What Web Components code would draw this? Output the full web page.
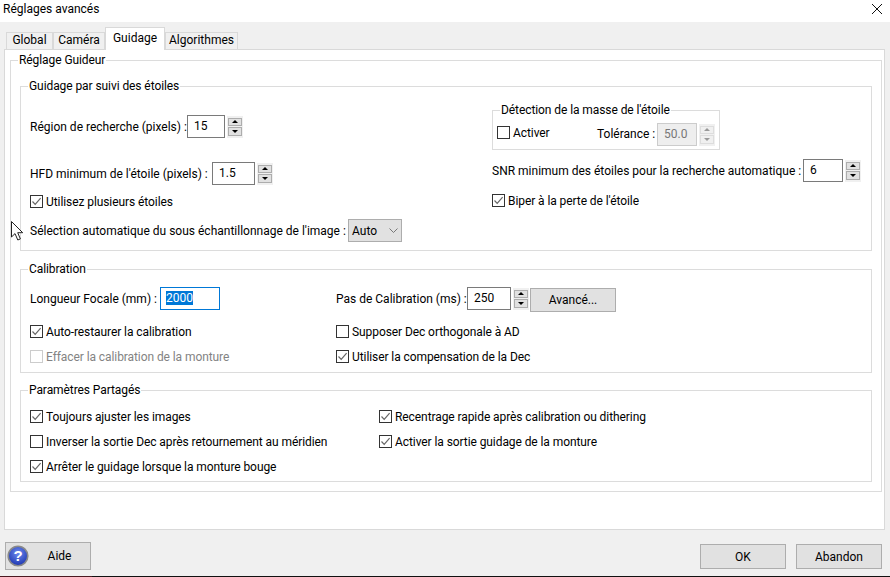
<!DOCTYPE html>
<html lang="fr">
<head>
<meta charset="utf-8">
<title>Réglages avancés</title>
<style>
  html, body { margin: 0; padding: 0; }
  body { width: 890px; height: 577px; overflow: hidden; background: #f0f0f0; font: 12px Roboto, sans-serif; color: #000; }
</style>
</head>
<body>
<template id="dialog-tpl">
  <style>
    :host { display: flex; flex-direction: column; position: relative; width: 890px; height: 577px; overflow: hidden; }
    .title { display: flex; justify-content: space-between; align-items: center; height: 22px; padding: 0 8px 5px 3px; box-sizing: border-box; background: #fff; }
    .title svg { display: block; align-self: flex-start; margin-top: 4px; }
    .tabs { display: flex; align-items: flex-end; height: 27px; padding-left: 6px; box-sizing: border-box; }
    .pane { height: 481px; margin: 0 5px 0 4px; padding: 10px 2px 0 5px; box-sizing: border-box; background: #fff; border: 1px solid #d9d9d9; }
    .footer { display: flex; align-items: flex-start; height: 46px; padding: 14px 8px 0 5px; box-sizing: border-box; gap: 10px; }
    .footer ::slotted(win-button[slot="help"]) { margin-right: auto; }
    .strip { height: 1px; background: linear-gradient(to right, #4a1820 92px, #111 92px); }
    .cursor { position: absolute; left: 11px; top: 221px; }
  </style>
  <div class="title"><slot name="caption"></slot>
    <svg width="10" height="10" viewBox="0 0 10 10"><path d="M0 0L10 10M10 0L0 10" stroke="#111" stroke-width="1"/></svg>
  </div>
  <div class="tabs"><slot name="tabs"></slot></div>
  <div class="pane"><slot></slot></div>
  <div class="footer"><slot name="help"></slot><slot name="actions"></slot></div>
  <div class="strip"></div>
  <svg class="cursor" width="13" height="20" viewBox="0 0 13 20"><path d="M.5.5V16L4 12.6 6.8 19l2.6-1.1-2.7-6.2h5z" fill="#fff" stroke="#222" stroke-width="1"/></svg>
</template>

<template id="tab-tpl">
  <style>
    :host { display: block; box-sizing: border-box; height: 17px; line-height: 14px; text-align: center; background: #f0f0f0; border: 1px solid #d9d9d9; border-bottom: none; white-space: nowrap; }
    :host([selected]) { position: relative; z-index: 1; height: 23px; margin-bottom: -1px; line-height: 20px; background: #fff; }
  </style>
  <slot></slot>
</template>

<template id="group-tpl">
  <style>
    :host { display: block; box-sizing: border-box; border: 1px solid #dcdcdc; }
    .legend { display: block; width: max-content; height: 16px; line-height: 17px; margin: -9px 0 0 7px; padding: 0 1px; background: #fff; letter-spacing: -.08px; }
  </style>
  <div class="legend"><slot name="legend"></slot></div>
  <slot></slot>
</template>

<template id="check-tpl">
  <style>
    :host { display: flex; align-items: center; gap: 3px; height: 13px; white-space: nowrap; letter-spacing: -.08px; }
    :host([disabled]) { color: #838383; }
    .box { width: 13px; height: 13px; flex: none; box-sizing: border-box; border: 1px solid #333; background: #fff; }
    :host([disabled]) .box { border-color: #ccc; }
    svg { display: none; }
    :host([checked]) svg { display: block; }
  </style>
  <div class="box"><svg width="11" height="11" viewBox="0 0 11 11"><path d="M1.5 5.5L4.2 8.3 9.6 2.2" fill="none" stroke="#666" stroke-width="1.2"/></svg></div>
  <span><slot></slot></span>
</template>

<template id="spin-tpl">
  <style>
    :host { display: flex; align-items: center; gap: 2px; flex: none; }
    .field { box-sizing: border-box; height: 23px; line-height: 20px; padding-left: 6px; border: 1px solid #7a7a7a; background: #fff; }
    :host([disabled]) .field { background: #eee; border-color: #ccc; color: #777; }
    .arrows { display: flex; flex-direction: column; gap: 1px; box-sizing: border-box; width: 16px; height: 22px; padding: 2px 1px; background: #f0f0f0; }
    .arrows div { flex: 1; box-sizing: border-box; display: flex; align-items: center; justify-content: center; background: #e1e1e1; border: 1px solid #adadad; }
    :host([disabled]) .arrows div { background: #f0f0f0; border-color: #ddd; }
    svg { display: block; fill: #000; }
    :host([disabled]) svg { fill: #999; }
  </style>
  <div class="field" id="field"><slot></slot></div>
  <div class="arrows">
    <div><svg width="6" height="3"><path d="M3 0L6 3H0z"/></svg></div>
    <div><svg width="6" height="3"><path d="M0 0H6L3 3z"/></svg></div>
  </div>
</template>

<template id="button-tpl">
  <style>
    :host { display: flex; align-items: center; box-sizing: border-box; width: 86px; height: 25px; background: #e1e1e1; border: 1px solid #adadad; }
    .label { flex: 1; text-align: center; }
    ::slotted(svg) { flex: none; }
  </style>
  <slot name="icon"></slot><span class="label"><slot></slot></span>
</template>

<template id="combo-tpl">
  <style>
    :host { display: flex; align-items: center; justify-content: space-between; box-sizing: border-box; width: 54px; height: 23px; padding: 0 3px; background: #e1e1e1; border: 1px solid #adadad; }
    svg { display: block; }
  </style>
  <span><slot></slot></span>
  <svg width="9" height="5"><path d="M.5.5L4.5 4.5 8.5.5" fill="none" stroke="#777"/></svg>
</template>

<template id="form-row-tpl">
  <style>
    :host { display: flex; align-items: center; height: 23px; white-space: nowrap; }
  </style>
  <slot></slot>
</template>

<win-dialog>
  <span slot="caption">Réglages avancés</span>
  <win-tab slot="tabs" style="width:47px">Global</win-tab>
  <win-tab slot="tabs" style="width:52px">Caméra</win-tab>
  <win-tab slot="tabs" style="width:60px" selected>Guidage</win-tab>
  <win-tab slot="tabs" style="width:73px">Algorithmes</win-tab>

  <guide-settings></guide-settings>

  <win-button slot="help" style="height:28px;margin-top:-2px">
    <svg slot="icon" width="22" height="22" viewBox="0 0 22 22" style="margin-left:1px">
      <defs><radialGradient id="help-blue" cx="50%" cy="35%" r="65%"><stop offset="0" stop-color="#6f8cf0"/><stop offset="1" stop-color="#1c35b0"/></radialGradient></defs>
      <circle cx="11" cy="11" r="9.8" fill="url(#help-blue)" stroke="#8a8a8a" stroke-width="1.6"/>
      <text x="11" y="16" text-anchor="middle" font-family="Liberation Sans" font-weight="700" font-size="15" fill="#fff">?</text>
    </svg>
    Aide
  </win-button>
  <win-button slot="actions">OK</win-button>
  <win-button slot="actions">Abandon</win-button>
</win-dialog>

<script>
  // small helper, every element below is just a template + open shadow root
  function define(name, tplId) {
    customElements.define(name, class extends HTMLElement {
      constructor() {
        super();
        this.attachShadow({ mode: "open" });
        this.shadowRoot.append(document.getElementById(tplId).content.cloneNode(true));
      }
    });
  }
  define("win-dialog", "dialog-tpl");
  define("win-tab", "tab-tpl");
  define("win-group", "group-tpl");
  define("win-check", "check-tpl");
  define("win-button", "button-tpl");
  define("win-combo", "combo-tpl");
  define("form-row", "form-row-tpl");

  customElements.define("win-spin", class extends HTMLElement {
    constructor() {
      super();
      this.attachShadow({ mode: "open" });
      this.shadowRoot.append(document.getElementById("spin-tpl").content.cloneNode(true));
      this.shadowRoot.getElementById("field").style.width = (this.getAttribute("field") || 38) + "px";
    }
  });

  // the Guidage page
  const pageTemplate = document.createElement("template");
  pageTemplate.innerHTML = `
    <style>
      :host { display: block; }
      .outer { height: 432px; }
      .stack { display: flex; flex-direction: column; margin: 18px 9px 0 9px; }
      .g1 { height: 165px; }
      .g2 { height: 104px; margin-top: 18px; }
      .g3 { height: 92px; margin-top: 17px; }
      .body { display: grid; padding-left: 9px; }
      .g1 .body { grid-template-columns: 462px 1fr; }
      .g2 .body { grid-template-columns: 306px 1fr; }
      .g3 .body { grid-template-columns: 349px 1fr; }
      .col { display: flex; flex-direction: column; align-items: flex-start; }
      .mass { width: 228px; height: 40px; }
      .mass-row { display: grid; grid-template-columns: 100px auto; align-items: start; padding: 5px 0 0 4px; }
      .mass-row win-check { margin-top: 3px; }
      .mass-row form-row .lbl { margin-top: -1px; }
      .lbl { display: block; flex: none; }
      .sel { display: inline-block; background: #0078d7; color: #fff; line-height: 14px; }
      .focus { box-sizing: border-box; width: 60px; height: 23px; line-height: 20px; padding-left: 5px; border: 1px solid #0078d7; background: #fff; }
      .btn { margin-left: 1px; height: 24px; align-self: flex-start; margin-top: 1px; }
    </style>
    <win-group class="outer">
      <span slot="legend">Réglage Guideur</span>
      <div class="stack">
        <win-group class="g1">
          <span slot="legend">Guidage par suivi des étoiles</span>
          <div class="body">
            <div class="col" style="margin-top:21px">
              <form-row><span class="lbl" style="width:157px">Région de recherche (pixels) :</span><win-spin field="38"><span>15</span></win-spin></form-row>
              <form-row style="margin-top:24px"><span class="lbl" style="width:182px">HFD minimum de l'étoile (pixels) :</span><win-spin field="43"><span>1.5</span></win-spin></form-row>
              <win-check checked style="margin-top:10px">Utilisez plusieurs étoiles</win-check>
              <form-row style="margin-top:11px"><span class="lbl" style="width:318px">Sélection automatique du sous échantillonnage de l'image :</span><win-combo>Auto</win-combo></form-row>
            </div>
            <div class="col" style="margin-top:16px">
              <win-group class="mass">
                <span slot="legend">Détection de la masse de l'étoile</span>
                <div class="mass-row">
                  <win-check>Activer</win-check>
                  <form-row><span class="lbl" style="width:60px">Tolérance :</span><win-spin field="40" disabled><span>50.0</span></win-spin></form-row>
                </div>
              </win-group>
              <form-row style="margin-top:9px"><span class="lbl" style="width:311px">SNR minimum des étoiles pour la recherche automatique :</span><win-spin field="40"><span>6</span></win-spin></form-row>
              <win-check checked style="margin-top:12px">Biper à la perte de l'étoile</win-check>
            </div>
          </div>
        </win-group>

        <win-group class="g2">
          <span slot="legend">Calibration</span>
          <div class="body">
            <div class="col" style="margin-top:10px">
              <form-row><span class="lbl" style="width:130px">Longueur Focale (mm) :</span><div class="focus"><span class="sel">2000</span></div></form-row>
              <win-check checked style="margin-top:15px">Auto-restaurer la calibration</win-check>
              <win-check disabled style="margin-top:12px">Effacer la calibration de la monture</win-check>
            </div>
            <div class="col" style="margin-top:10px">
              <form-row><span class="lbl" style="width:131px">Pas de Calibration (ms) :</span><win-spin field="44"><span>250</span></win-spin><win-button class="btn">Avancé...</win-button></form-row>
              <win-check style="margin-top:15px">Supposer Dec orthogonale à AD</win-check>
              <win-check checked style="margin-top:12px">Utiliser la compensation de la Dec</win-check>
            </div>
          </div>
        </win-group>

        <win-group class="g3">
          <span slot="legend">Paramètres Partagés</span>
          <div class="body">
            <div class="col" style="margin-top:12px">
              <win-check checked>Toujours ajuster les images</win-check>
              <win-check style="margin-top:12px">Inverser la sortie Dec après retournement au méridien</win-check>
              <win-check checked style="margin-top:12px">Arrêter le guidage lorsque la monture bouge</win-check>
            </div>
            <div class="col" style="margin-top:12px">
              <win-check checked>Recentrage rapide après calibration ou dithering</win-check>
              <win-check checked style="margin-top:12px">Activer la sortie guidage de la monture</win-check>
            </div>
          </div>
        </win-group>
      </div>
    </win-group>
  `;
  customElements.define("guide-settings", class extends HTMLElement {
    constructor() {
      super();
      this.attachShadow({ mode: "open" });
      this.shadowRoot.append(pageTemplate.content.cloneNode(true));
    }
  });
</script>
</body>
</html>
